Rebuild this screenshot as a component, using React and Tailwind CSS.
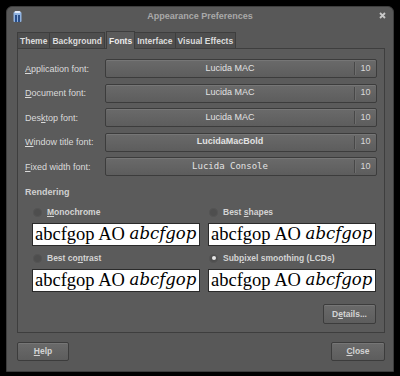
import React from "react";

const U = ({ children }) => <span className="underline underline-offset-[1px]">{children}</span>;

const btn =
  "rounded-[2px] border border-[#3c3c3c] bg-gradient-to-b from-[#6a6a6a] to-[#5d5d5d] shadow-[inset_0_1px_0_#767676]";

function FontRow({ label, value, bold, mono }) {
  return (
    <div className="flex items-center h-[19px]">
      <div className="w-[80px] text-[9px] leading-[12px] text-[#dadada] whitespace-nowrap">{label}</div>
      <div className={"flex-1 h-[19px] flex " + btn}>
        <div
          className={
            "flex-1 flex items-center justify-center text-[9px] text-[#e2e2e2] whitespace-nowrap " +
            (bold ? "font-bold " : "") +
            (mono ? "font-['DejaVu_Sans_Mono'] text-[8.5px]" : "")
          }
        >
          {value}
        </div>
        <div className="w-px my-[2px] bg-[#474747] shadow-[1px_0_0_#6e6e6e]" />
        <div className="w-[21px] flex items-center justify-center text-[9px] text-[#d8d8d8]">10</div>
      </div>
    </div>
  );
}

function Radio({ checked, children }) {
  return (
    <div className="flex items-center h-[12px] pl-[1px]">
      <div className="w-[9px] h-[9px] rounded-full bg-[#4e4e4e] border border-[#545454] flex items-center justify-center">
        {checked && <div className="w-[4px] h-[4px] rounded-full bg-[#e6e6e6]" />}
      </div>
      <span className="ml-[5px] text-[8.5px] font-bold text-[#d4d4d4] whitespace-nowrap">{children}</span>
    </div>
  );
}

function Preview() {
  return (
    <div className="h-[23px] bg-white border border-[#2a2a2a] flex items-center px-[2px] font-['Liberation_Serif'] text-[18.5px] text-black leading-none whitespace-nowrap overflow-hidden">
      abcfgop AO&nbsp;<span className="italic font-['DejaVu_Serif'] text-[16.5px]">abcfgop</span>
    </div>
  );
}

export default function App() {
  return (
    <div className="w-[400px] h-[376px] bg-black overflow-hidden pl-[6px] pt-[6px] font-['Liberation_Sans',sans-serif]">
      <div className="w-[388px] h-[366px] rounded-t-[6px] border border-[#3d3d3d] bg-[#585858] flex flex-col">
        {/* title bar */}
        <div className="h-[17px] flex items-center relative">
          <svg width="9" height="11" viewBox="0 0 9 11" className="absolute left-[6px] top-[4px]">
            <rect x="0.5" y="1" width="8" height="10" rx="1" fill="#8fb2e0" />
            <rect x="2" y="4" width="2" height="7" fill="#2a4f8a" />
            <rect x="5" y="4" width="2" height="7" fill="#2a4f8a" />
            <rect x="1.5" y="0" width="6" height="2" rx="1" fill="#dfe9f8" />
          </svg>
          <div className="w-full text-center text-[9px] leading-[12px] font-bold text-[#a9a9a9]">Appearance Preferences</div>
          <svg width="7" height="7" viewBox="0 0 7 7" className="absolute right-[7px] top-[5px]">
            <path d="M1 1L6 6M6 1L1 6" stroke="#c8c8c8" strokeWidth="1.8" />
          </svg>
        </div>

        {/* tabs */}
        <div className="ml-[10px] mr-[8px] mt-[6px] flex flex-col">
          <div className="flex items-end h-[18px] text-[8.5px] leading-[12px] font-bold text-[#dcdcdc] whitespace-nowrap">
            <div className="h-[16px] px-[2px] flex items-center bg-[#4e4e4e] border border-[#3e3e3e] border-b-0">Theme</div>
            <div className="h-[16px] px-[2px] flex items-center bg-[#4e4e4e] border border-[#3e3e3e] border-b-0 border-l-0">Background</div>
            <div className="h-[18px] px-[2px] ml-[1px] flex items-center bg-[#5b5b5b] border border-[#3e3e3e] border-b-0 relative top-[1px] text-[#ededed]">Fonts</div>
            <div className="h-[16px] px-[2px] flex items-center bg-[#4e4e4e] border border-[#3e3e3e] border-b-0 border-l-0">Interface</div>
            <div className="h-[16px] px-[2px] flex items-center bg-[#4e4e4e] border border-[#3e3e3e] border-b-0 border-l-0">Visual Effects</div>
          </div>
          <div className="bg-[#5b5b5b] border border-[#3e3e3e] px-[7px] pt-[10px] pb-[8px] flex flex-col">
            <div className="flex flex-col gap-[5.5px]">
              <FontRow label={<><U>A</U>pplication font:</>} value="Lucida MAC" />
              <FontRow label={<><U>D</U>ocument font:</>} value="Lucida MAC" />
              <FontRow label={<>Des<U>k</U>top font:</>} value="Lucida MAC" />
              <FontRow label={<><U>W</U>indow title font:</>} value="LucidaMacBold" bold />
              <FontRow label={<><U>F</U>ixed width font:</>} value="Lucida Console" mono />
            </div>
            <div className="mt-[10px] text-[9px] leading-[12px] font-bold text-[#d0d0d0]">Rendering</div>
            <div className="mt-[8px] ml-[7px] mr-[1px] grid grid-cols-2 gap-x-[8px] gap-y-[6px]">
              <div className="flex flex-col gap-[5px]">
                <Radio><U>M</U>onochrome</Radio>
                <Preview />
              </div>
              <div className="flex flex-col gap-[5px]">
                <Radio>Best <U>s</U>hapes</Radio>
                <Preview />
              </div>
              <div className="flex flex-col gap-[5px]">
                <Radio>Best co<U>n</U>trast</Radio>
                <Preview />
              </div>
              <div className="flex flex-col gap-[5px]">
                <Radio checked>Sub<U>p</U>ixel smoothing (LCDs)</Radio>
                <Preview />
              </div>
            </div>
            <div className="mt-[12px] flex justify-end pr-[1px]">
              <div className={"w-[53px] h-[20px] flex items-center justify-center text-[8.5px] font-bold text-[#d4d4d4] " + btn}>
                D<U>e</U>tails...
              </div>
            </div>
          </div>
        </div>

        {/* bottom buttons */}
        <div className="mt-[9px] ml-[10px] mr-[8px] flex justify-between">
          <div className={"w-[52px] h-[19px] flex items-center justify-center text-[8.5px] font-bold text-[#d4d4d4] " + btn}>
            <U>H</U>elp
          </div>
          <div className={"w-[54px] h-[19px] flex items-center justify-center text-[8.5px] font-bold text-[#d4d4d4] " + btn}>
            <U>C</U>lose
          </div>
        </div>
      </div>
    </div>
  );
}
